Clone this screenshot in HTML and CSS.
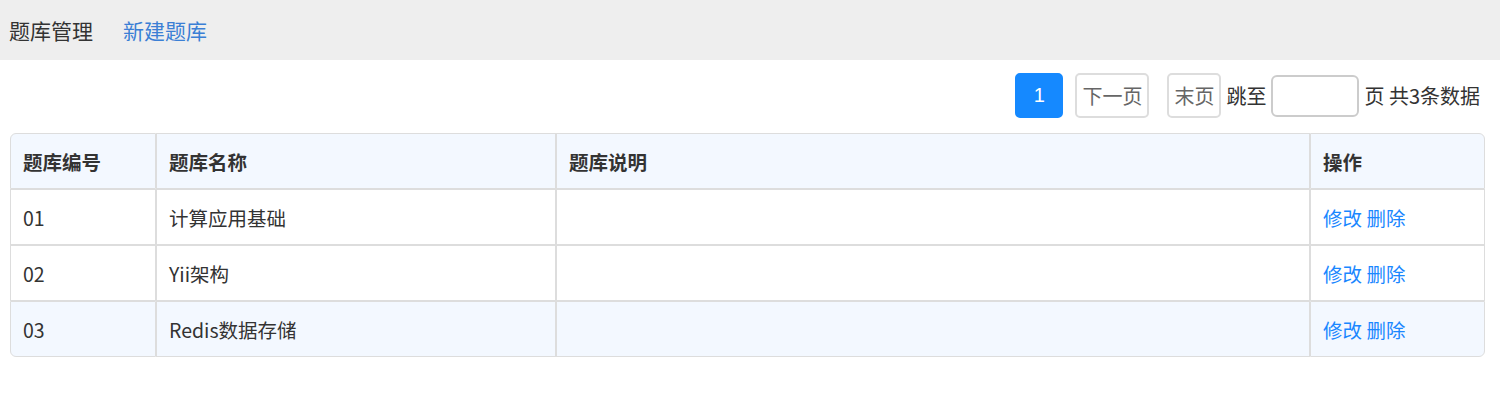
FILE: index.html
```html
<!DOCTYPE html>
<html lang="zh">
<head>
<meta charset="utf-8">
<title>题库管理</title>
<link rel="stylesheet" href="styles.css">
</head>
<body>
<div class="topbar">
  <span class="title">题库管理</span>
  <a class="newlink" href="#">新建题库</a>
</div>
<div class="content">
  <div class="pager">
    <span class="pbtn current">1</span>
    <span class="pbtn">下一页</span>
    <span class="pbtn last">末页</span>
    <span class="ptext">跳至</span>
    <input class="pinput" type="text">
    <span class="ptext">页 共3条数据</span>
  </div>
  <div class="tablewrap">
    <table class="grid">
      <thead>
        <tr><th class="c1">题库编号</th><th class="c2">题库名称</th><th class="c3">题库说明</th><th class="c4">操作</th></tr>
      </thead>
      <tbody>
        <tr><td>01</td><td>计算应用基础</td><td></td><td><a href="#">修改</a> <a href="#">删除</a></td></tr>
        <tr><td>02</td><td>Yii架构</td><td></td><td><a href="#">修改</a> <a href="#">删除</a></td></tr>
        <tr class="alt"><td>03</td><td>Redis数据存储</td><td></td><td><a href="#">修改</a> <a href="#">删除</a></td></tr>
      </tbody>
    </table>
  </div>
</div>
</body>
</html>
```
FILE: styles.css
```css
* { box-sizing: border-box; }
body {
  margin: 0;
  font-family: "Noto Sans CJK SC", "Microsoft YaHei", sans-serif;
  color: #333;
  background: #fff;
}
a { text-decoration: none; color: #1a87ff; }
.topbar {
  height: 60px;
  background: #eeeeee;
  display: flex;
  align-items: center;
  padding-left: 9px;
  gap: 30px;
  font-size: 21px;
}
.topbar .title { color: #333; }
.topbar .newlink { color: #3b7fd5; }
.content { padding: 13px 15px 0 10px; }
.pager {
  display: flex;
  justify-content: flex-end;
  align-items: center;
  height: 45px;
  padding-right: 5px;
  font-size: 20px;
}
.pbtn {
  height: 45px;
  display: flex;
  align-items: center;
  justify-content: center;
  padding: 0 5px;
  border: 2px solid #ddd;
  border-radius: 5px;
  color: #666;
  margin-left: 12px;
}
.pbtn.current {
  width: 48px;
  background: #1589ff;
  border-color: #1589ff;
  color: #fff;
  margin-left: 0;
  font-family: "Liberation Sans", Arial, sans-serif;
}
.pbtn.last { margin-left: 18px; }
.ptext { margin-left: 5px; color: #333; }
.pinput {
  width: 88px;
  height: 42px;
  margin-left: 5px;
  border: 2px solid #ccc;
  border-radius: 6px;
}
.tablewrap {
  margin-top: 15px;
  width: 1475px;
}
.grid {
  width: 100%;
  border-collapse: separate;
  border-spacing: 0;
  font-size: 19.5px;
  table-layout: fixed;
}
.grid th, .grid td {
  border: 1px solid #dddddd;
  height: 56px;
  padding: 0 12px;
  text-align: left;
}
.grid th { background: #f3f8ff; font-weight: bold; }
.grid tr.alt td { background: #f3f8ff; }
.c1 { width: 146px; }
.c2 { width: 400px; }
.c3 { width: 754px; }
.c4 { width: 175px; }
.grid thead tr th:first-child { border-top-left-radius: 6px; }
.grid thead tr th:last-child { border-top-right-radius: 6px; }
.grid tbody tr:last-child td:first-child { border-bottom-left-radius: 6px; }
.grid tbody tr:last-child td:last-child { border-bottom-right-radius: 6px; }
```
